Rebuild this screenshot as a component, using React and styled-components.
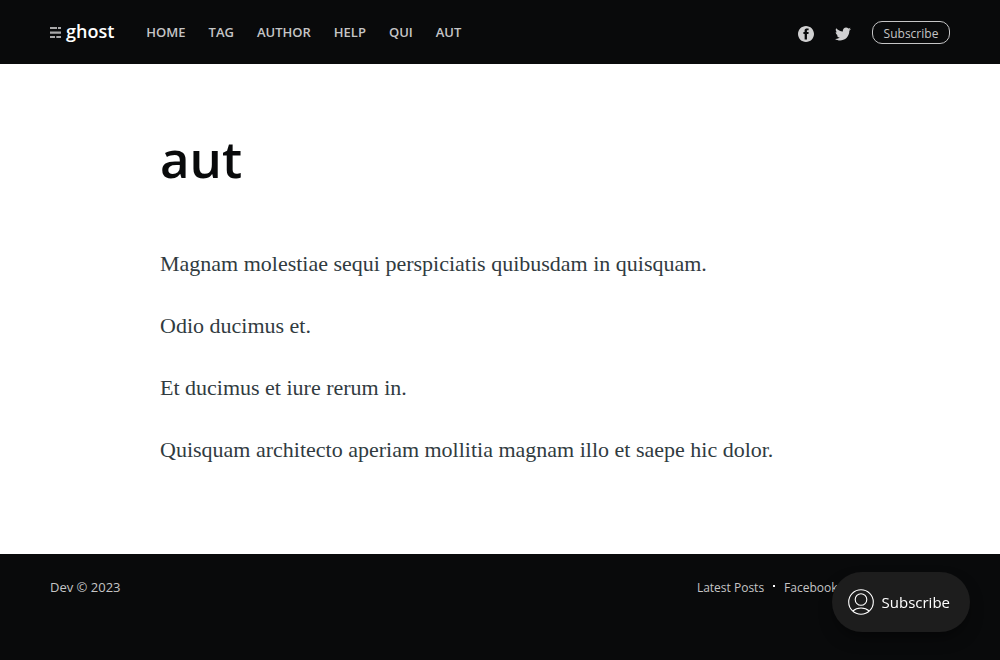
import React from "react";
import styled, { createGlobalStyle } from "styled-components";

const GlobalStyle = createGlobalStyle`
  *, *::before, *::after { box-sizing: border-box; }
  body {
    margin: 0;
    background: #fff;
    color: #15171a;
    font-family: "Open Sans", "Noto Sans", sans-serif;
    font-size: 13px;
  }
  a { color: inherit; text-decoration: none; }
`;

const Page = styled.div`
  display: flex;
  flex-direction: column;
  min-height: 100vh;
`;

const Header = styled.header`
  display: flex;
  align-items: center;
  justify-content: space-between;
  height: 64px;
  padding: 0 50px;
  background: #090a0b;
  color: #c5c5c6;
`;

const HeaderGroup = styled.div`
  display: flex;
  align-items: center;
  gap: ${(p) => p.$gap}px;
`;

const Logo = styled.a`
  display: flex;
  align-items: center;
  gap: 4px;
  color: #fff;
  font-size: 18px;
  line-height: 22px;
  font-weight: 600;
  padding-bottom: 2px;
  svg { display: block; margin-top: 3px; }
`;

const NavList = styled.ul`
  display: flex;
  gap: 23px;
  margin: 0;
  padding: 0;
  list-style: none;
`;

const NavLink = styled.a`
  display: block;
  font-size: 13px;
  line-height: 20px;
  font-weight: 600;
  text-transform: uppercase;
`;

const SocialLink = styled.a`
  display: block;
  padding-top: 3px;
  svg { display: block; fill: #d0d0d1; }
`;

const SubscribeButton = styled.button`
  min-width: 78px;
  height: 23px;
  padding: 2px 8px 0;
  border: 1px solid #c5c5c6;
  border-radius: 10px;
  background: transparent;
  color: #c5c5c6;
  font: 400 12px/20px "Open Sans", "Noto Sans", sans-serif;
  cursor: pointer;
`;

const Main = styled.main`
  flex: 1;
  padding: 62px 50px 88px;
`;

const Article = styled.article`
  max-width: 680px;
  margin: 0 auto;
`;

const Title = styled.h1`
  margin: 0 0 58px;
  color: #090a0b;
  font-size: 51px;
  line-height: 64px;
  font-weight: 600;
`;

const Paragraph = styled.p`
  margin: 0 0 30px;
  color: #313b3f;
  font-family: "Liberation Serif", serif;
  font-size: 22px;
  line-height: 32px;
  &:last-child { margin-bottom: 0; }
`;

const Footer = styled.footer`
  display: flex;
  justify-content: space-between;
  min-height: 106px;
  padding: 24px 50px;
  background: #090a0b;
  color: #c5c5c6;
  line-height: 18px;
`;

const FooterNav = styled.nav`
  display: flex;
  font-size: 12px;
  line-height: 20px;
  a + a::before {
    content: "";
    display: inline-block;
    width: 2px;
    height: 2px;
    margin: 0 9px 5px;
    background: #fff;
  }
`;

const Portal = styled.button`
  position: fixed;
  right: 30px;
  bottom: 28px;
  display: flex;
  align-items: center;
  gap: 8px;
  height: 60px;
  padding: 0 20px 0 16px;
  border: 0;
  border-radius: 30px;
  background: #1d1d1d;
  box-shadow: 0 8px 16px -4px rgba(0, 0, 0, 0.5);
  color: #fff;
  font: 400 15px/24px "Open Sans", "Noto Sans", sans-serif;
  cursor: pointer;
`;

const LogoMark = () => (
  <svg width="12" height="12" viewBox="0 0 12 12" fill="#a8a8a9" aria-hidden="true">
    <path d="M0 0h7v2H0zM8 0h3v2H8zM0 4.5h11v2.2H0zM0 9h5v2H0zM6.3 9H11v2H6.3z" />
  </svg>
);

const FacebookIcon = () => (
  <svg width="16" height="16" viewBox="0 0 32 32" aria-hidden="true">
    <path d="M16 0c8.837 0 16 7.163 16 16s-7.163 16-16 16S0 24.837 0 16 7.163 0 16 0zm5.204 4.911h-3.546c-2.103 0-4.443.885-4.443 3.934.01 1.062 0 2.08 0 3.225h-2.433v3.872h2.509v11.147h4.61v-11.22h3.042l.275-3.81h-3.397s.007-1.695 0-2.187c0-1.205 1.253-1.136 1.329-1.136.596 0 1.756.002 2.054 0V4.911z" />
  </svg>
);

const TwitterIcon = () => (
  <svg width="18" height="18" viewBox="0 0 32 32" aria-hidden="true">
    <path d="M30.063 7.313c-.813 1.125-1.75 2.125-2.875 2.938v.75c0 1.563-.188 3.125-.688 4.625a15.088 15.088 0 0 1-2.063 4.438c-.875 1.438-2 2.688-3.25 3.813a15.015 15.015 0 0 1-4.625 2.563c-1.813.688-3.75 1-5.75 1-3.25 0-6.188-.875-8.875-2.625.438.063.875.125 1.375.125 2.688 0 5.063-.875 7.188-2.5-1.25 0-2.375-.375-3.375-1.125s-1.688-1.688-2.063-2.875c.438.063.813.125 1.125.125.5 0 1-.063 1.5-.25-1.313-.25-2.438-.938-3.313-1.938a5.673 5.673 0 0 1-1.313-3.688v-.063c.813.438 1.688.688 2.625.688a5.228 5.228 0 0 1-1.875-2c-.5-.875-.688-1.813-.688-2.75 0-1.063.25-2.063.75-2.938 1.438 1.75 3.188 3.188 5.25 4.25s4.313 1.688 6.688 1.813a5.579 5.579 0 0 1 1.5-5.438c1.125-1.125 2.5-1.688 4.125-1.688s3.063.625 4.188 1.813a11.48 11.48 0 0 0 3.688-1.375c-.438 1.375-1.313 2.438-2.563 3.188 1.125-.125 2.188-.438 3.313-.875z" />
  </svg>
);

const MemberIcon = () => (
  <svg width="26" height="26" viewBox="0 0 26 26" fill="none" stroke="#fff" strokeWidth="1.1" aria-hidden="true">
    <circle cx="13" cy="13" r="12.3" />
    <circle cx="13" cy="10.5" r="5.8" />
    <path d="M4.8 22c2.2-2 5-3 8.2-3s6 1 8.2 3" />
  </svg>
);

const navItems = ["Home", "Tag", "Author", "Help", "qui", "aut"];
const footerItems = ["Latest Posts", "Facebook", "Twitter", "Ghost"];
const paragraphs = [
  "Magnam molestiae sequi perspiciatis quibusdam in quisquam.",
  "Odio ducimus et.",
  "Et ducimus et iure rerum in.",
  "Quisquam architecto aperiam mollitia magnam illo et saepe hic dolor.",
];

export default function App() {
  return (
    <Page>
      <GlobalStyle />
      <Header>
        <HeaderGroup $gap={32}>
          <Logo href="#"><LogoMark />ghost</Logo>
          <nav>
            <NavList>
              {navItems.map((item) => (
                <li key={item}><NavLink href="#">{item}</NavLink></li>
              ))}
            </NavList>
          </nav>
        </HeaderGroup>
        <HeaderGroup $gap={20}>
          <SocialLink href="#" aria-label="Facebook"><FacebookIcon /></SocialLink>
          <SocialLink href="#" aria-label="Twitter"><TwitterIcon /></SocialLink>
          <SubscribeButton type="button">Subscribe</SubscribeButton>
        </HeaderGroup>
      </Header>
      <Main>
        <Article>
          <Title>aut</Title>
          {paragraphs.map((text) => <Paragraph key={text}>{text}</Paragraph>)}
        </Article>
      </Main>
      <Footer>
        <section><a href="#">Dev</a> © 2023</section>
        <FooterNav>
          {footerItems.map((item) => <a href="#" key={item}>{item}</a>)}
        </FooterNav>
      </Footer>
      <Portal type="button"><MemberIcon />Subscribe</Portal>
    </Page>
  );
}
